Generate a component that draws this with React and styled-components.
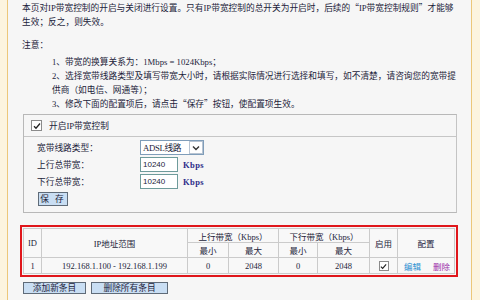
import React from 'react';
import styled, { createGlobalStyle } from 'styled-components';

const GlobalStyle = createGlobalStyle`
  html, body {
    margin: 0;
    padding: 0;
    background: #fcf4df;
  }
  * {
    box-sizing: border-box;
  }
`;

const Panel = styled.div`
  width: 465px;
  height: 300px;
  margin-left: 7px;
  padding: 1px 13px 0 14px;
  background: #f6f6f6;
  border-left: 1px solid #ecc77a;
  border-right: 1px solid #ecc77a;
  font-family: 'Liberation Serif', 'Noto Sans CJK SC', serif;
  font-size: 8.7px;
  color: #1c1c3a;
  overflow: hidden;
`;

const Line = styled.div`
  white-space: nowrap;
  line-height: 14px;
  height: 14px;
  margin-left: ${p => p.$indent || 0}px;
  margin-top: ${p => p.$top || 0}px;
`;

// full-width quotes as in the original
const Q = styled.span`
  font-family: 'Noto Sans CJK SC', sans-serif;
`;

const Box = styled.div`
  margin-top: 3px;
  margin-left: 1px;
  width: 434px;
  border: 1px solid #b8b8b8;
  border-right-color: #c4c4c4;
`;

const BoxHeader = styled.div`
  display: flex;
  align-items: center;
  gap: 7px;
  height: 22px;
  padding-left: 7px;
  border-bottom: 1px solid #c6c6c6;
`;

const Check = styled.span`
  display: inline-flex;
  align-items: center;
  justify-content: center;
  width: ${p => p.$size || 11}px;
  height: ${p => p.$size || 11}px;
  background: #fff;
  border: 1px solid #8b8b8b;
`;

const FormGrid = styled.div`
  display: grid;
  grid-template-columns: 103px auto;
  row-gap: 2px;
  align-items: center;
  padding: 3px 0 6px 13px;
`;

const Field = styled.div`
  display: flex;
  align-items: center;
  gap: 5px;
`;

const Select = styled.div`
  display: flex;
  align-items: center;
  width: 64px;
  height: 15px;
  background: #fff;
  border: 1px solid #7f9db9;
  padding-left: 2px;
`;

const SelectText = styled.span`
  flex: 1;
  white-space: nowrap;
  letter-spacing: -0.3px;
`;

const Arrow = styled.span`
  display: flex;
  align-items: center;
  justify-content: center;
  width: 14px;
  height: 13px;
  border: 1px solid #b8c4d2;
  background: #fff;
`;

const Input = styled.div`
  width: 38px;
  height: 15px;
  line-height: 13px;
  background: #fff;
  border: 1px solid #6e9b9b;
  padding-left: 2px;
  font-family: 'Liberation Sans', 'Noto Sans CJK SC', sans-serif;
  font-size: 8px;
`;

const Unit = styled.span`
  color: #2e2e8a;
  font-weight: bold;
  font-size: 8.5px;
  letter-spacing: 0.4px;
`;

const Button = styled.button`
  height: ${p => p.$h || 12}px;
  width: ${p => p.$w}px;
  padding: 0;
  background: #c9def3;
  border: 1px solid #5f6b78;
  font-family: 'Noto Sans CJK SC', sans-serif;
  font-size: 8.7px;
  line-height: 1;
  color: #1c1c3a;
  letter-spacing: ${p => p.$ls || 0}px;
`;

const SaveRow = styled.div`
  grid-column: 1 / 3;
  margin-left: 1px;
  padding-top: 1px;
`;

const RedFrame = styled.div`
  margin-top: 12px;
  margin-left: -2px;
  width: 438px;
  border: 2px solid #e0161b;
  padding: 1px;
`;

const Table = styled.table`
  width: 100%;
  table-layout: fixed;
  border-collapse: collapse;
  background: #f8f8f8;
`;

const Cell = styled.td`
  border: 1px solid #cbcbcb;
  text-align: center;
  padding: 0;
  height: ${p => p.$h || 14}px;
  white-space: nowrap;
  font-size: 8.5px;
`;

const Link = styled.span`
  color: ${p => p.$color};
  margin: 0 6px;
`;

const Actions = styled.div`
  display: flex;
  gap: 5px;
  margin-top: 5px;
  margin-left: 1px;
`;

const Tick = ({ size = 8 }) => (
  <svg width={size} height={size} viewBox="0 0 8 8">
    <path d="M1 4.2 L3 6.2 L7 1.5" fill="none" stroke="#222" strokeWidth="1.3" />
  </svg>
);

export default function App() {
  return (
    <>
      <GlobalStyle />
      <Panel>
        <Line>本页对IP带宽控制的开启与关闭进行设置。只有IP带宽控制的总开关为开启时，后续的<Q>“</Q>IP带宽控制规则<Q>”</Q>才能够</Line>
        <Line>生效；反之，则失效。</Line>
        <Line $top={9}>注意：</Line>
        <Line $indent={30} $top={3}>1、带宽的换算关系为：1Mbps = 1024Kbps；</Line>
        <Line $indent={30}>2、选择宽带线路类型及填写带宽大小时，请根据实际情况进行选择和填写，如不清楚，请咨询您的宽带提</Line>
        <Line $indent={30}>供商（如电信、网通等）；</Line>
        <Line $indent={30}>3、修改下面的配置项后，请点击<Q>“</Q>保存<Q>”</Q>按钮，使配置项生效。</Line>

        <Box>
          <BoxHeader>
            <Check><Tick /></Check>
            <span>开启IP带宽控制</span>
          </BoxHeader>
          <FormGrid>
            <span>宽带线路类型：</span>
            <Field>
              <Select>
                <SelectText>ADSL线路</SelectText>
                <Arrow>
                  <svg width="8" height="6" viewBox="0 0 8 6">
                    <path d="M1 1.5 L4 4.5 L7 1.5" fill="none" stroke="#333" strokeWidth="1.4" />
                  </svg>
                </Arrow>
              </Select>
            </Field>
            <span>上行总带宽：</span>
            <Field>
              <Input>10240</Input>
              <Unit>Kbps</Unit>
            </Field>
            <span>下行总带宽：</span>
            <Field>
              <Input>10240</Input>
              <Unit>Kbps</Unit>
            </Field>
            <SaveRow>
              <Button $w={30} $h={14} $ls={2}>保 存</Button>
            </SaveRow>
          </FormGrid>
        </Box>

        <RedFrame>
          <Table>
            <colgroup>
              <col style={{ width: 18 }} />
              <col style={{ width: 146 }} />
              <col style={{ width: 41 }} />
              <col style={{ width: 50 }} />
              <col style={{ width: 39 }} />
              <col style={{ width: 52 }} />
              <col style={{ width: 28 }} />
              <col />
            </colgroup>
            <tbody>
              <tr>
                <Cell rowSpan={2}>ID</Cell>
                <Cell rowSpan={2}>IP地址范围</Cell>
                <Cell colSpan={2} $h={14}>上行带宽（Kbps）</Cell>
                <Cell colSpan={2} $h={14}>下行带宽（Kbps）</Cell>
                <Cell rowSpan={2}>启用</Cell>
                <Cell rowSpan={2}>配置</Cell>
              </tr>
              <tr>
                <Cell $h={15}>最小</Cell>
                <Cell $h={15}>最大</Cell>
                <Cell $h={15}>最小</Cell>
                <Cell $h={15}>最大</Cell>
              </tr>
              <tr>
                <Cell $h={16}>1</Cell>
                <Cell $h={16}>192.168.1.100 - 192.168.1.199</Cell>
                <Cell $h={16}>0</Cell>
                <Cell $h={16}>2048</Cell>
                <Cell $h={16}>0</Cell>
                <Cell $h={16}>2048</Cell>
                <Cell $h={16}>
                  <Check $size={10} style={{ verticalAlign: 'middle' }}><Tick size={7} /></Check>
                </Cell>
                <Cell $h={16}>
                  <Link $color="#2a8fd0">编辑</Link>
                  <Link $color="#9a2fa8">删除</Link>
                </Cell>
              </tr>
            </tbody>
          </Table>
        </RedFrame>

        <Actions>
          <Button $w={63}>添加新条目</Button>
          <Button $w={77}>删除所有条目</Button>
        </Actions>
      </Panel>
    </>
  );
}
